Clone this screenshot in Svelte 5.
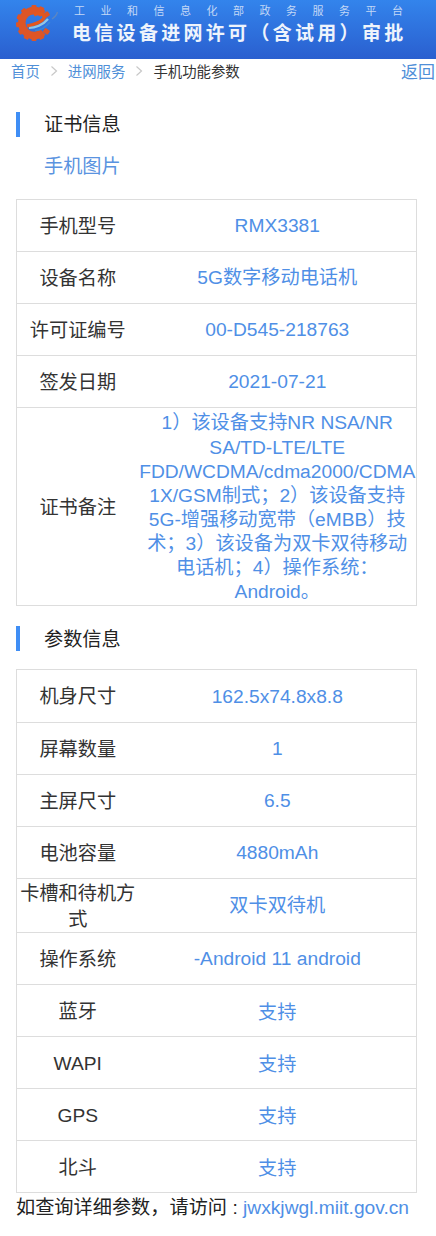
<script>
  const cert = [
    ['手机型号', 'RMX3381'],
    ['设备名称', '5G数字移动电话机'],
    ['许可证编号', '00-D545-218763'],
    ['签发日期', '2021-07-21'],
    ['证书备注', '1）该设备支持NR NSA/NR SA/TD-LTE/LTE FDD/WCDMA/cdma2000/CDMA 1X/GSM制式；2）该设备支持5G-增强移动宽带（eMBB）技术；3）该设备为双卡双待移动电话机；4）操作系统：Android。']
  ];
  const params = [
    ['机身尺寸', '162.5x74.8x8.8'],
    ['屏幕数量', '1'],
    ['主屏尺寸', '6.5'],
    ['电池容量', '4880mAh'],
    ['卡槽和待机方式', '双卡双待机'],
    ['操作系统', '-Android 11 android'],
    ['蓝牙', '支持'],
    ['WAPI', '支持'],
    ['GPS', '支持'],
    ['北斗', '支持']
  ];
  const teeth = [0, 28, 56, 124, 152, 180, 208, 236, 264, 292, 320];
</script>

<div class="page">
  <header class="banner">
    <svg class="logo" viewBox="0 0 46 44" width="46" height="44" aria-hidden="true">
      {#each teeth as a}
        <rect x="16.5" y="3" width="5" height="6" rx="1" fill="#dd5526" transform="rotate({a} 19 21)" />
      {/each}
      <path d="M28 30A12.5 12.5 0 1 1 28 12" fill="none" stroke="#dd5526" stroke-width="7.5" />
      <path d="M12 24C18 23 27 20 29 16 30 12 24 10 19 13" fill="none" stroke="#e2571f" stroke-width="3.4" />
      <path d="M14 26C20 26 28 23 33 17" fill="none" stroke="#8fc7e8" stroke-width="2.2" />
      <path d="M20 28.5C25 28.5 30 26 35 20" fill="none" stroke="#3a86d4" stroke-width="1.6" />
      <path d="M37 17C40 15 42 12 42.5 10" fill="none" stroke="#5a86c4" stroke-width="1.4" />
    </svg>
    <div class="titles">
      <div class="sup">工业和信息化部政务服务平台</div>
      <div class="main">电信设备进网许可（含试用）审批</div>
    </div>
  </header>

  <nav class="crumbs">
    <a href="#top" class="crumb">首页</a>
    <svg class="chev" viewBox="0 0 8 12" width="8" height="12" aria-hidden="true"><path d="M1.5 1.5 6.5 6l-5 4.5" /></svg>
    <a href="#top" class="crumb">进网服务</a>
    <svg class="chev" viewBox="0 0 8 12" width="8" height="12" aria-hidden="true"><path d="M1.5 1.5 6.5 6l-5 4.5" /></svg>
    <span class="current">手机功能参数</span>
    <a href="#top" class="back">返回</a>
  </nav>

  <h2 class="section first">证书信息</h2>
  <a href="#top" class="photo">手机图片</a>

  <table class="cert">
    <tbody>
      {#each cert as [k, v]}
        <tr><th>{k}</th><td>{v}</td></tr>
      {/each}
    </tbody>
  </table>

  <h2 class="section second">参数信息</h2>

  <table class="params">
    <tbody>
      {#each params as [k, v]}
        <tr><th>{k}</th><td>{v}</td></tr>
      {/each}
    </tbody>
  </table>

  <p class="foot">如查询详细参数，请访问 : <a href="#top">jwxkjwgl.miit.gov.cn</a></p>
</div>

<style>
  :global(body) {
    margin: 0;
    background: #fff;
  }
  .page {
    width: 436px;
    height: 1236px;
    overflow: hidden;
    font-family: "Liberation Sans", "Noto Sans CJK SC", sans-serif;
    font-size: 19.2px;
    color: #333;
  }
  a {
    color: #4f8fe6;
    text-decoration: none;
  }
  .banner {
    height: 59px;
    display: flex;
    align-items: flex-start;
    padding: 2px 0 0 15px;
    box-sizing: border-box;
    background: linear-gradient(#3384ec, #2a5fcf);
  }
  .logo {
    flex: none;
  }
  .titles {
    display: flex;
    flex-direction: column;
    gap: 4px;
    margin: 2px 0 0 11px;
    color: #fff;
    width: 340px;
  }
  .sup {
    font-size: 11px;
    line-height: 14px;
    color: #c3d8f6;
    letter-spacing: 15.5px;
    padding-left: 2px;
    white-space: nowrap;
  }
  .main {
    font-size: 19px;
    line-height: 24px;
    font-weight: 700;
    letter-spacing: 3.3px;
    color: #eef4fc;
    white-space: nowrap;
  }
  .crumbs {
    height: 26px;
    display: flex;
    align-items: center;
    padding: 0 0 3px 11px;
    box-sizing: border-box;
    font-size: 14.4px;
  }
  .crumb {
    color: #4f8fd8;
  }
  .chev {
    margin: 0 10px;
    fill: none;
    stroke: #c8c8c8;
    stroke-width: 1.2;
  }
  .current {
    color: #333;
  }
  .back {
    margin-left: auto;
    font-size: 17px;
    color: #4f8fd8;
    margin-right: 1px;
  }
  .section {
    margin: 0;
    border-left: 4px solid #3f8ef5;
    margin-left: 16px;
    padding-left: 24px;
    height: 25px;
    line-height: 25px;
    font-size: 19.2px;
    font-weight: 400;
    color: #222;
  }
  .section.first {
    margin-top: 27px;
  }
  .photo {
    display: block;
    margin: 17px 0 0 44px;
    font-size: 19.2px;
    line-height: 25px;
    color: #5a93e0;
  }
  table {
    border-collapse: collapse;
    width: 401px;
    margin-left: 16px;
    table-layout: fixed;
    border: 1px solid #ddd;
  }
  .cert {
    margin-top: 20px;
  }
  .params {
    margin-top: 18px;
  }
  .section.second {
    margin-top: 20px;
    line-height: 27px;
  }
  tr {
    border-bottom: 1px solid #ddd;
  }
  th, td {
    padding: 2px 0 0;
    text-align: center;
    font-weight: 400;
    font-size: 19.2px;
    height: 49px;
  }
  th {
    width: 122px;
    color: #333;
    box-sizing: border-box;
    line-height: 25.5px;
    height: 51px;
  }
  td {
    color: #4f8fe6;
    line-height: 24.15px;
  }
  .cert tr:last-child td {
    height: 194px;
    padding: 3px 0 0;
  }
  .params tr:first-child td {
    height: 50px;
  }
  .params tr:nth-child(n+7) td {
    padding-top: 5px;
    height: 46px;
  }
  .foot {
    margin: 0 0 0 16px;
    font-size: 19.2px;
    line-height: 30px;
    color: #222;
    white-space: nowrap;
  }
</style>
